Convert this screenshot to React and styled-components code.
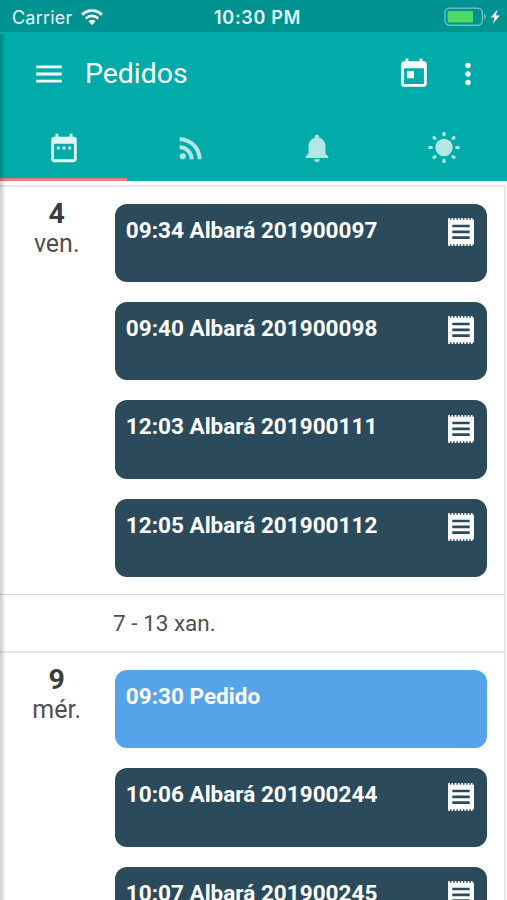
import styled, { createGlobalStyle } from 'styled-components';
import {
  MdMenu,
  MdToday,
  MdMoreVert,
  MdDateRange,
  MdRssFeed,
  MdNotifications,
} from 'react-icons/md';

const GlobalStyle = createGlobalStyle`
  * {
    box-sizing: border-box;
  }
  body {
    margin: 0;
    background: #fff;
    font-family: Roboto, 'Liberation Sans', sans-serif;
    color: #3c3c3c;
  }
`;

const Screen = styled.div`
  position: relative;
  width: 507px;
  height: 900px;
  overflow: hidden;
  background: #fff;
`;

const EdgeShadow = styled.div`
  position: absolute;
  top: 34px;
  bottom: 0;
  left: 0;
  width: 6px;
  background: linear-gradient(to right, rgba(0, 0, 0, 0.2), rgba(0, 0, 0, 0));
`;

const StatusBar = styled.div`
  display: grid;
  grid-template-columns: 1fr auto 1fr;
  align-items: center;
  height: 32px;
  padding: 2px 5px 0 12px;
  background: #009290;
  color: #e4fbfa;
  font-family: Inter, 'Liberation Sans', sans-serif;
  font-size: 18px;
`;

const Carrier = styled.div`
  display: flex;
  align-items: center;
  gap: 9px;
  letter-spacing: 0.2px;
`;

const Clock = styled.div`
  font-weight: 600;
  font-size: 18px;
  letter-spacing: 0.7px;
  padding-left: 1px;
`;

const Power = styled.div`
  display: flex;
  justify-content: flex-end;
`;

const Toolbar = styled.header`
  display: flex;
  align-items: center;
  height: 84px;
  padding: 0 22px 0 32px;
  background: #00aba9;
  color: #fff;
  svg {
    width: 34px;
    height: 34px;
  }
`;

const Title = styled.h1`
  flex: 1;
  margin: 0 0 2px 19px;
  font-size: 28.4px;
  font-weight: 400;
`;

const Actions = styled.div`
  display: flex;
  gap: 20px;
`;

const Tabs = styled.nav`
  display: grid;
  grid-template-columns: repeat(4, 1fr);
  height: 65px;
  background: #00aba9;
`;

const Tab = styled.div`
  display: flex;
  align-items: center;
  justify-content: center;
  padding: 2px 0 0 1px;
  border-bottom: 3px solid ${(props) => (props.$active ? '#e57f7f' : 'transparent')};
  color: ${(props) => (props.$active ? '#def7f6' : '#b3e6e5')};
  svg {
    width: 34px;
    height: 34px;
  }
`;

const Agenda = styled.main`
  width: 505.5px;
  height: 715px;
  margin-top: 4px;
  border-top: 2px solid #e6e6e6;
  border-right: 2px solid #e6e6e6;
`;

const Day = styled.section`
  display: flex;
  padding: 16.5px 16.5px 17.5px 0;
`;

const DayLabel = styled.div`
  width: 115.4px;
  padding-right: 2px;
  text-align: center;
  font-size: 25px;
  line-height: 30px;
  margin-top: -4.4px;
  color: #505050;
  strong {
    display: block;
    font-size: 28.5px;
    color: #3c3c3c;
  }
`;

const Events = styled.div`
  flex: 1;
  display: flex;
  flex-direction: column;
  gap: 20px;
`;

const EventCard = styled.div`
  display: flex;
  justify-content: space-between;
  height: 78.35px;
  padding: 12px 13.5px 0 10.4px;
  border-radius: 12px;
  background: ${(props) => (props.$order ? '#55a4e9' : '#2b4a5b')};
  color: #fff;
  font-size: 22.55px;
  font-weight: 700;
  line-height: 30px;
  svg {
    margin-top: 2.4px;
  }
`;

const Week = styled.div`
  display: flex;
  align-items: center;
  height: 59px;
  padding-left: 113px;
  border-top: 1px solid #dadada;
  border-bottom: 2px solid #e6e6e6;
  color: #505050;
  font-size: 22.5px;
`;

const days = [
  {
    number: 4,
    name: 'ven.',
    events: [
      { time: '09:34', title: 'Albará 201900097' },
      { time: '09:40', title: 'Albará 201900098' },
      { time: '12:03', title: 'Albará 201900111' },
      { time: '12:05', title: 'Albará 201900112' },
    ],
  },
  {
    number: 9,
    name: 'mér.',
    week: '7 - 13 xan.',
    events: [
      { time: '09:30', title: 'Pedido', order: true },
      { time: '10:06', title: 'Albará 201900244' },
      { time: '10:07', title: 'Albará 201900245' },
    ],
  },
];

const WifiIcon = () => (
  <svg width="22" height="16" viewBox="0 0 22 16" fill="none" stroke="#fff">
    <path d="M1.2 5.6a14 14 0 0 1 19.6 0" strokeWidth="2.9" />
    <path d="M4.8 9.4a9 9 0 0 1 12.4 0" strokeWidth="2.7" />
    <path d="M11 16l-3.6-3.7a5.2 5.2 0 0 1 7.2 0z" fill="#fff" stroke="none" />
  </svg>
);

const BatteryIcon = () => (
  <svg width="58" height="20" viewBox="0 0 58 20">
    <rect x="1" y="1.2" width="37.4" height="17" rx="4.5" fill="none" stroke="#66bebc" strokeWidth="1.5" />
    <rect x="3.6" y="4" width="25.4" height="11.6" rx="1" fill="#4cd964" />
    <path d="M40 7q2 .8 2 2.7T40 12.4z" fill="#66bebc" />
    <path d="M53.6 2.4l-6.8 8.2h3.9L48.8 17l7-8.6h-4z" fill="#fff" />
  </svg>
);

const SunIcon = () => (
  <svg viewBox="0 0 34 34" fill="currentColor">
    <circle cx="17" cy="16.5" r="8.7" />
    {[0, 45, 90, 135, 180, 225, 270, 315].map((angle) => (
      <rect
        key={angle}
        x="15.4"
        y="0.9"
        width="3.2"
        height="4.3"
        rx="1.2"
        transform={`rotate(${angle} 17 16.5)`}
      />
    ))}
  </svg>
);

// receipt with eight small notches on the top and bottom edges
const ReceiptIcon = () => (
  <svg width="26" height="28" viewBox="0 0 26 28">
    <path d="M0 1.7h26v24.6H0z" fill="#fff" />
    <path d="M.2 1h26M.2 27h26" stroke="#fff" strokeWidth="2" strokeDasharray="1.7 1.54" />
    <path d="M4.3 8h17.4M4.3 13.8h17.4M4.3 19.6h17.4" stroke="#2b4a5b" strokeWidth="2.7" />
  </svg>
);

const tabIcons = [MdDateRange, MdRssFeed, MdNotifications, SunIcon];

const App = () => {
  return (
    <Screen>
      <GlobalStyle />
      <StatusBar>
        <Carrier>
          Carrier
          <WifiIcon />
        </Carrier>
        <Clock>10:30 PM</Clock>
        <Power>
          <BatteryIcon />
        </Power>
      </StatusBar>
      <Toolbar>
        <MdMenu />
        <Title>Pedidos</Title>
        <Actions>
          <MdToday />
          <MdMoreVert />
        </Actions>
      </Toolbar>
      <Tabs>
        {tabIcons.map((Icon, index) => (
          <Tab key={index} $active={index === 0}>
            <Icon />
          </Tab>
        ))}
      </Tabs>
      <Agenda>
        {days.map((day) => (
          <div key={day.number}>
            {day.week && <Week>{day.week}</Week>}
            <Day>
              <DayLabel>
                <strong>{day.number}</strong>
                {day.name}
              </DayLabel>
              <Events>
                {day.events.map((event) => (
                  <EventCard key={event.time} $order={event.order}>
                    <span>
                      {event.time} {event.title}
                    </span>
                    {!event.order && <ReceiptIcon />}
                  </EventCard>
                ))}
              </Events>
            </Day>
          </div>
        ))}
      </Agenda>
      <EdgeShadow />
    </Screen>
  );
};

export default App;
